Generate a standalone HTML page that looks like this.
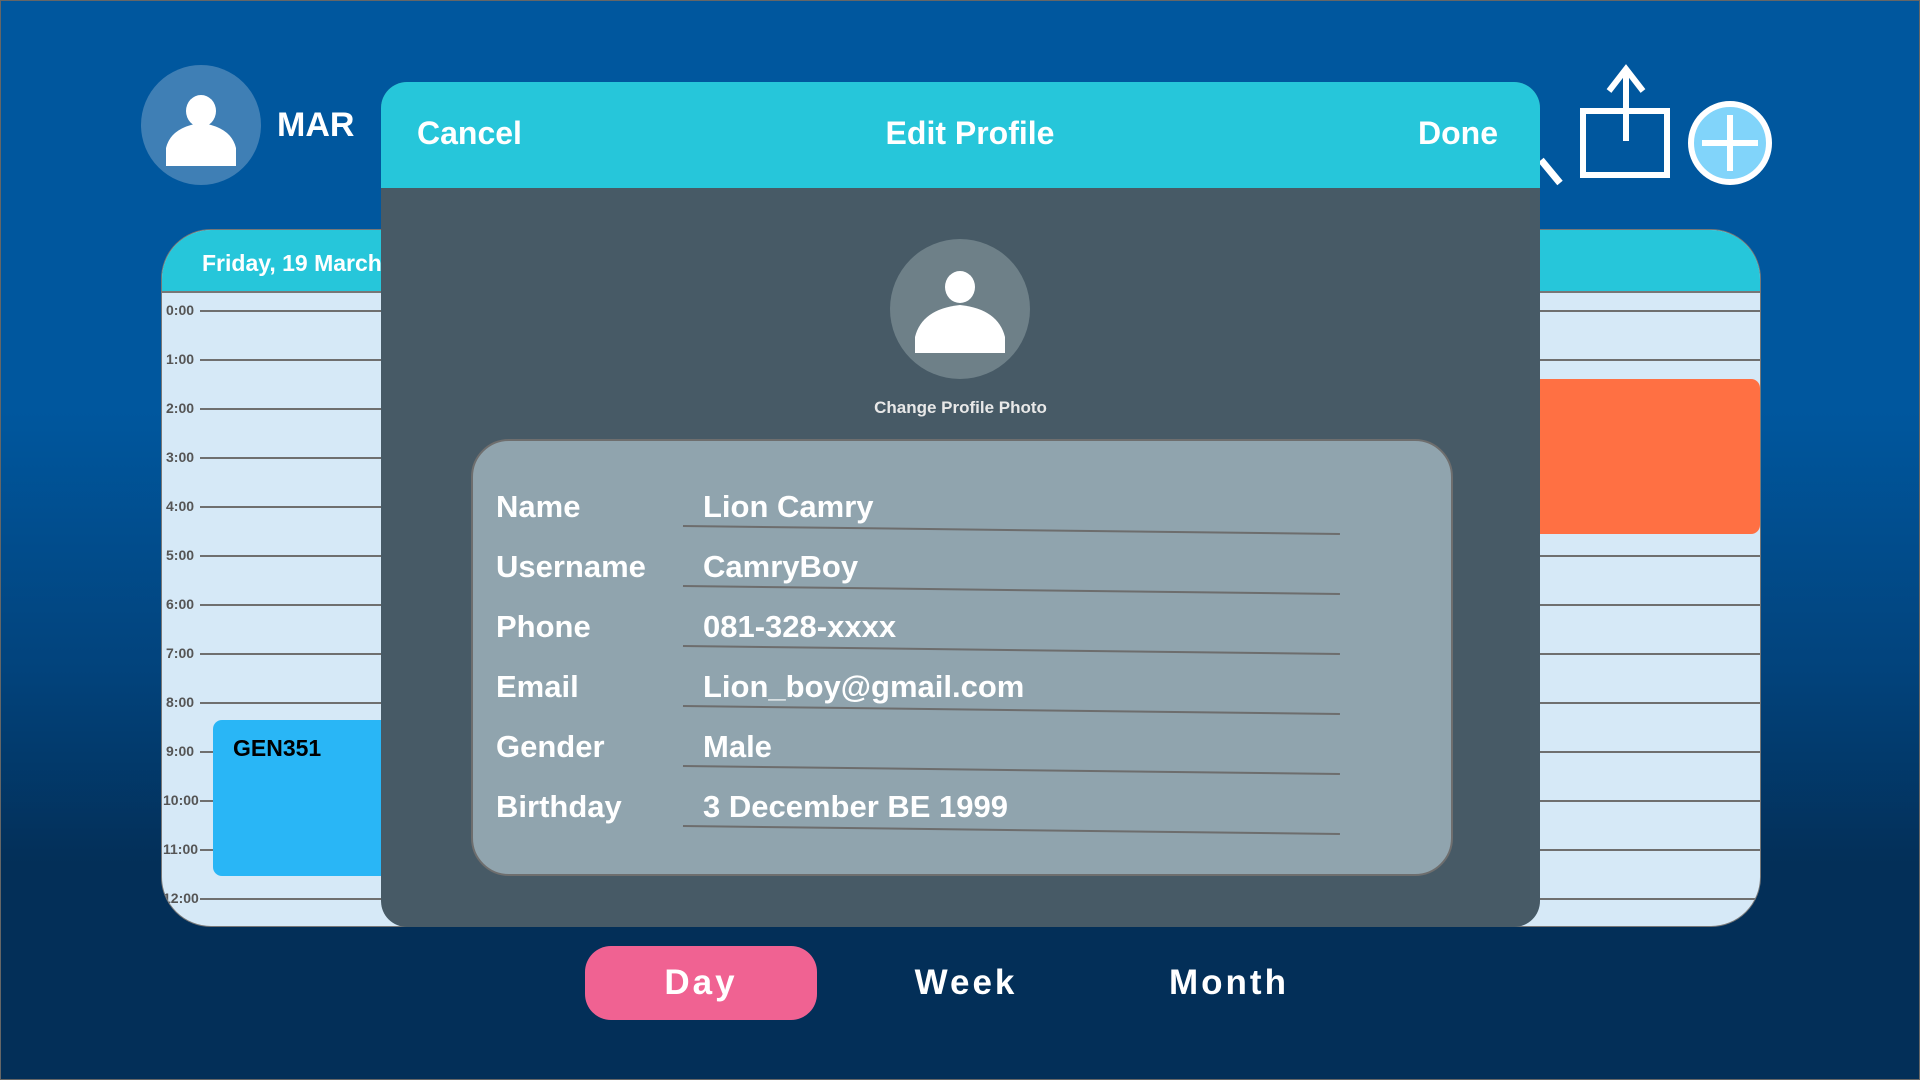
<!DOCTYPE html>
<html><head><meta charset="utf-8"><style>
*{margin:0;padding:0;box-sizing:border-box}
body{width:1920px;height:1080px;overflow:hidden;font-family:"Liberation Sans",sans-serif;font-weight:bold;position:relative;
background:linear-gradient(180deg,#00579e 0%,#00579e 38%,#02437c 62%,#032f58 80%,#032f58 100%);border:1px solid #666}
.abs{position:absolute}
.cal{left:160px;top:228px;width:1600px;height:698px;border-radius:50px;background:#d6e9f7;overflow:hidden;border:1px solid #777}
.calh{left:0;top:0;width:100%;height:63px;background:#26c6da;border-bottom:2px solid #777}
.tl{left:4px;font-size:14px;color:#555;font-weight:bold}
.ln{left:38px;width:1600px;height:2px;background:#6f6f6f}
.modal{left:380px;top:81px;width:1159px;height:845px;background:#475a66;border-radius:26px;overflow:hidden}
.mh{left:0;top:0;width:100%;height:106px;background:#26c6da}
.mh span{position:absolute;top:33px;font-size:32px;color:#fff}
.form{left:90px;top:357px;width:982px;height:437px;background:#90a4ae;border:2px solid #6e6e6e;border-radius:38px}
.lab{left:23px;font-size:31px;color:#fff}
.val{left:230px;font-size:31px;color:#fff}
.ul{left:210px;width:657px;height:2px;background:#6d6d6d;transform-origin:0 0;transform:rotate(0.7deg)}
.tab{top:962px;font-size:35px;color:#fff;letter-spacing:3px}
</style></head><body>
<svg class="abs" style="left:140px;top:64px" width="120" height="120" viewBox="0 0 120 120"><circle cx="60" cy="60" r="60" fill="#3f7fb5"/><ellipse cx="60" cy="46" rx="15" ry="16" fill="#fff"/><path d="M25 101 V83 Q30 62 60 58 Q90 62 95 83 V101 Z" fill="#fff"/></svg>
<div class="abs" style="left:276px;top:105px;font-size:34px;color:#fff">MAR</div>

<div class="abs cal">
 <div class="abs calh"><span class="abs" style="left:40px;top:20px;font-size:23px;color:#fff">Friday, 19 March</span></div>
 <div class="abs tl" style="top:72px">0:00</div><div class="abs ln" style="top:80px"></div>
 <div class="abs tl" style="top:121px">1:00</div><div class="abs ln" style="top:129px"></div>
 <div class="abs tl" style="top:170px">2:00</div><div class="abs ln" style="top:178px"></div>
 <div class="abs tl" style="top:219px">3:00</div><div class="abs ln" style="top:227px"></div>
 <div class="abs tl" style="top:268px">4:00</div><div class="abs ln" style="top:276px"></div>
 <div class="abs tl" style="top:317px">5:00</div><div class="abs ln" style="top:325px"></div>
 <div class="abs tl" style="top:366px">6:00</div><div class="abs ln" style="top:374px"></div>
 <div class="abs tl" style="top:415px">7:00</div><div class="abs ln" style="top:423px"></div>
 <div class="abs tl" style="top:464px">8:00</div><div class="abs ln" style="top:472px"></div>
 <div class="abs tl" style="top:513px">9:00</div><div class="abs ln" style="top:521px"></div>
 <div class="abs tl" style="top:562px;left:1px">10:00</div><div class="abs ln" style="top:570px"></div>
 <div class="abs tl" style="top:611px;left:1px">11:00</div><div class="abs ln" style="top:619px"></div>
 <div class="abs tl" style="top:660px;left:1px">12:00</div><div class="abs ln" style="top:668px"></div>
 <div class="abs" style="left:51px;top:490px;width:300px;height:156px;background:#29b6f6;border-radius:9px"><span class="abs" style="left:20px;top:15px;font-size:23px;color:#000">GEN351</span></div>
 <div class="abs" style="left:1300px;top:149px;width:298px;height:155px;background:#ff7043;border-radius:9px"></div>
</div>

<svg class="abs" style="left:1536px;top:155px" width="30" height="30"><line x1="4" y1="4" x2="23" y2="27" stroke="#fff" stroke-width="7"/></svg>
<svg class="abs" style="left:1575px;top:60px" width="100" height="122" viewBox="0 0 100 122"><rect x="7" y="50" width="84" height="64" fill="none" stroke="#fff" stroke-width="6"/><line x1="50" y1="12" x2="50" y2="80" stroke="#fff" stroke-width="6"/><polyline points="33,30 50,8 67,30" fill="none" stroke="#fff" stroke-width="6"/></svg>
<svg class="abs" style="left:1685px;top:98px" width="88" height="88" viewBox="0 0 88 88"><ellipse cx="44" cy="44" rx="39" ry="39" fill="#81d4fa" stroke="#fff" stroke-width="6"/><line x1="44" y1="16" x2="44" y2="72" stroke="#fff" stroke-width="6"/><line x1="16" y1="44" x2="72" y2="44" stroke="#fff" stroke-width="6"/></svg>

<div class="abs modal">
 <div class="abs mh"><span style="left:36px">Cancel</span><span style="left:0;width:1178px;text-align:center">Edit Profile</span><span style="right:42px">Done</span></div>
 <svg class="abs" style="left:509px;top:157px" width="140" height="140" viewBox="0 0 140 140"><circle cx="70" cy="70" r="70" fill="#6e8088"/><ellipse cx="70" cy="48" rx="15" ry="16" fill="#fff"/><path d="M25 114 V98 Q32 70 70 66 Q108 70 115 98 V114 Z" fill="#fff"/></svg>
 <div class="abs" style="left:0;width:1159px;text-align:center;top:316px;font-size:17px;color:#e8e8e8">Change Profile Photo</div>
 <div class="abs form">
  <div class="abs lab" style="top:48px">Name</div><div class="abs val" style="top:48px">Lion Camry</div><div class="abs ul" style="top:84px"></div>
  <div class="abs lab" style="top:108px">Username</div><div class="abs val" style="top:108px">CamryBoy</div><div class="abs ul" style="top:144px"></div>
  <div class="abs lab" style="top:168px">Phone</div><div class="abs val" style="top:168px">081-328-xxxx</div><div class="abs ul" style="top:204px"></div>
  <div class="abs lab" style="top:228px">Email</div><div class="abs val" style="top:228px">Lion_boy@gmail.com</div><div class="abs ul" style="top:264px"></div>
  <div class="abs lab" style="top:288px">Gender</div><div class="abs val" style="top:288px">Male</div><div class="abs ul" style="top:324px"></div>
  <div class="abs lab" style="top:348px">Birthday</div><div class="abs val" style="top:348px">3 December BE 1999</div><div class="abs ul" style="top:384px"></div>
 </div>
</div>

<div class="abs" style="left:584px;top:945px;width:232px;height:74px;background:#f06292;border-radius:26px"></div>
<div class="abs tab" style="left:584px;width:232px;text-align:center">Day</div>
<div class="abs tab" style="left:865px;width:200px;text-align:center">Week</div>
<div class="abs tab" style="left:1118px;width:220px;text-align:center">Month</div>
</body></html>
